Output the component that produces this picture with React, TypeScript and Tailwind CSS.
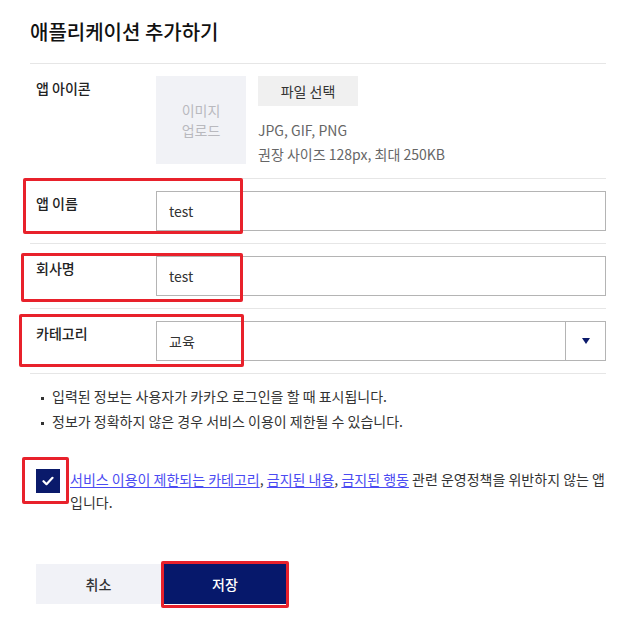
import React from 'react';

const FONT = "font-['Noto_Sans_CJK_KR','Noto_Sans',sans-serif]";

// red annotation boxes drawn over the form
const marks = [
  'left-[23px] top-[178px] w-[220px] h-[56px]',
  'left-[21px] top-[253px] w-[222px] h-[49px]',
  'left-[19px] top-[314px] w-[225px] h-[53px]',
  'left-[22px] top-[457px] w-[47px] h-[47px]',
  'left-[161px] top-[561px] w-[128px] h-[47px]',
];

const Row: React.FC<{ label: string; children: React.ReactNode }> = ({ label, children }) => (
  <div className="flex pl-[6px] pt-[12px] pb-[12px] border-b border-[#e6e6e6]">
    <div className="w-[120px] shrink-0 pt-[2px] text-[14px] leading-[20px] font-medium text-[#222]">{label}</div>
    <div className="flex-1">{children}</div>
  </div>
);

const Bullet: React.FC<{ children: React.ReactNode }> = ({ children }) => (
  <li className="flex items-start">
    <span className="w-[3px] h-[3px] bg-[#333] shrink-0 ml-[5px] mr-[8px] mt-[13px]" />
    {children}
  </li>
);

const linkCls = 'text-[#4b4bf2] underline underline-offset-2';

export default function App() {
  return (
    <div className={`relative w-[625px] h-[631px] bg-white overflow-hidden px-[30px] pt-[18px] ${FONT}`}>
      <h1 className="text-[20px] leading-[28px] font-medium text-[#111] mb-[17px]">애플리케이션 추가하기</h1>

      <div className="w-[576px] border-t border-[#e6e6e6]">
        {/* app icon */}
        <Row label="앱 아이콘">
          <div className="flex gap-[12px]">
            <div className="w-[90px] h-[88px] bg-[#f1f2f6] flex items-center justify-center text-center text-[14px] leading-[20px] text-[#b9b9be]">
              이미지<br />업로드
            </div>
            <div>
              <button className="w-[100px] h-[30px] bg-[#f0f0f0] text-[14px] text-[#333]">파일 선택</button>
              <div className="mt-[12px] text-[14px] leading-[24px] text-[#666]">
                <p>JPG, GIF, PNG</p>
                <p>권장 사이즈 128px, 최대 250KB</p>
              </div>
            </div>
          </div>
        </Row>

        <Row label="앱 이름">
          <div className="h-[40px] border border-[#b4b4b4] flex items-center pl-[12px] text-[14px] text-[#333]">test</div>
        </Row>

        <Row label="회사명">
          <div className="h-[40px] border border-[#b4b4b4] flex items-center pl-[12px] text-[14px] text-[#333]">test</div>
        </Row>

        <Row label="카테고리">
          <div className="h-[40px] border border-[#b4b4b4] flex text-[14px] text-[#333]">
            <div className="flex-1 flex items-center pl-[12px]">교육</div>
            <div className="w-[40px] border-l border-[#b4b4b4] flex items-center justify-center">
              <svg width="8" height="6" viewBox="0 0 8 6"><path d="M0 0h8L4 6z" fill="#0b1a6b" /></svg>
            </div>
          </div>
        </Row>
      </div>

      {/* notices */}
      <ul className="mt-[10px] px-[6px] text-[14px] leading-[25px] text-[#333]">
        <Bullet>입력된 정보는 사용자가 카카오 로그인을 할 때 표시됩니다.</Bullet>
        <Bullet>정보가 정확하지 않은 경우 서비스 이용이 제한될 수 있습니다.</Bullet>
      </ul>

      {/* agreement */}
      <div className="mt-[35px] pl-[6px] w-[576px] flex gap-[10px] text-[14px] leading-[23px] text-[#333]">
        <div className="w-[24px] h-[24px] shrink-0 bg-[#0a1a6b] flex items-center justify-center">
          <svg width="12" height="10" viewBox="0 0 12 10"><path d="M1.5 5.2l3 3L10.5 1.8" fill="none" stroke="white" strokeWidth="2.2" strokeLinecap="round" strokeLinejoin="round" /></svg>
        </div>
        <p className="-mt-[1px] flex-1 break-all">
          <a className={linkCls}>서비스 이용이 제한되는 카테고리</a>,{' '}
          <a className={linkCls}>금지된 내용</a>,{' '}
          <a className={linkCls}>금지된 행동</a> 관련 운영정책을 위반하지 않는 앱입니다.
        </p>
      </div>

      {/* actions */}
      <div className="mt-[50px] px-[6px] flex gap-[3px]">
        <button className="w-[125px] h-[40px] bg-[#f1f2f7] text-[14px] font-medium text-[#333]">취소</button>
        <button className="w-[122px] h-[40px] bg-[#06186b] text-[14px] font-medium text-white">저장</button>
      </div>

      {marks.map((m, i) => (
        <div key={i} className={`absolute border-[3px] border-[#e8212b] rounded-[2px] pointer-events-none ${m}`} />
      ))}
    </div>
  );
}
